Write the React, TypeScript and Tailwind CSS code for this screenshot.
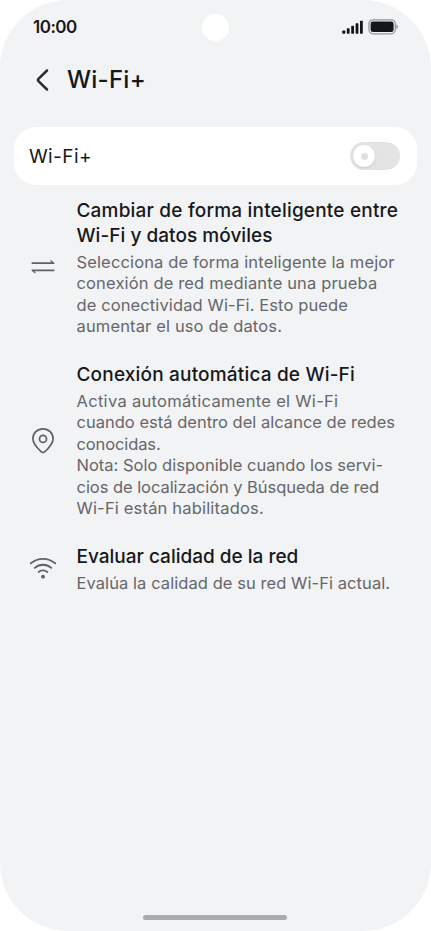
import React from "react";

type Line = { text: string; className: string };

type FeatureProps = {
  icon: React.ReactNode;
  title: Line[];
  body: Line[];
};

const SwapIcon: React.FC = () => (
  <svg width="28" height="28" viewBox="0 0 28 28" fill="#606163">
    <path d="M2.6 8.2H22.6L21.3 7.1Q20.8 6.4 21.6 6.2Q22 6.1 22.5 6.5L25.2 8.8Q25.8 9.3 25.4 9.8L25.2 9.9H2.6Z" />
    <path d="M25.4 15.5H2.8Q2.1 15.9 2.7 16.7L5.4 19.1Q6 19.5 6.4 19.1Q6.9 18.7 6.3 18.1L5.3 17.2H25.4Z" />
  </svg>
);

const PinIcon: React.FC = () => (
  <svg width="28" height="28" viewBox="0 0 28 28" fill="none" stroke="#606163" strokeWidth="1.7">
    <path
      d="M14 1.9C8.3 1.9 3.9 6.1 3.9 11.7C3.9 16.9 8.1 20.9 12.1 24.7C13.3 25.8 14.7 25.8 15.9 24.7C19.9 20.9 24.1 16.9 24.1 11.7C24.1 6.1 19.7 1.9 14 1.9Z"
      strokeLinejoin="round"
    />
    <circle cx="14" cy="11.9" r="3.5" />
  </svg>
);

const WifiIcon: React.FC = () => (
  <svg
    width="28"
    height="28"
    viewBox="0 0 28 28"
    fill="none"
    stroke="#606163"
    strokeWidth="1.8"
    strokeLinecap="round"
  >
    <path d="M1.8 8.3C8.8 2.3 19.2 2.3 26.2 8.3" />
    <path d="M5.7 12.9C10.5 8.7 17.5 8.7 22.3 12.9" />
    <path d="M9.7 17C12.1 14.9 15.9 14.9 18.3 17" />
    <circle cx="14" cy="21.7" r="1.9" fill="#606163" stroke="none" />
  </svg>
);

const StatusBar: React.FC = () => (
  <div className="relative flex h-[54px] items-center justify-between pl-[33px] pr-8">
    <span className="pt-0.5 text-[17px] font-semibold tracking-[-0.5px]">10:00</span>
    <span className="absolute left-[202px] top-3.5 size-[27px] rounded-full bg-white" />
    <div className="flex items-center gap-1">
      <svg width="22" height="14" viewBox="0 0 22 14" fill="#151618">
        <rect x="0.3" y="10.5" width="3" height="3.2" rx="0.7" />
        <rect x="4.8" y="8.2" width="2.8" height="5.5" rx="0.6" />
        <rect x="9.2" y="5.8" width="2.8" height="7.9" rx="0.6" />
        <rect x="13.6" y="3.3" width="2.8" height="10.4" rx="0.6" />
        <rect x="18" y="0.8" width="2.8" height="12.9" rx="0.6" />
      </svg>
      <svg width="31" height="16" viewBox="0 0 31 16" fill="none">
        <rect x="0.9" y="0.8" width="26.4" height="14" rx="4.2" stroke="#939496" strokeWidth="1.2" />
        <rect x="2.6" y="2.5" width="23" height="10.6" rx="2.4" fill="#151618" />
        <path d="M28.4 5.8C30.3 6.4 30.3 9.4 28.4 10Z" fill="#858688" />
      </svg>
    </div>
  </div>
);

const Feature: React.FC<FeatureProps> = ({ icon, title, body }) => (
  <section className="flex items-center gap-[19.5px]">
    <div className="shrink-0">{icon}</div>
    <div className="whitespace-nowrap">
      <h2 className="text-[19px] font-medium leading-[25px]">
        {title.map((line) => (
          <span key={line.text} className={`block ${line.className}`}>
            {line.text}
          </span>
        ))}
      </h2>
      <p className="mt-[3.5px] text-[16.5px] leading-[21.5px] text-[#66676a]">
        {body.map((line) => (
          <span key={line.text} className={`block ${line.className}`}>
            {line.text}
          </span>
        ))}
      </p>
    </div>
  </section>
);

const features: FeatureProps[] = [
  {
    icon: <SwapIcon />,
    title: [
      { text: "Cambiar de forma inteligente entre", className: "tracking-[0.19px]" },
      { text: "Wi-Fi y datos móviles", className: "tracking-[0.04px]" },
    ],
    body: [
      { text: "Selecciona de forma inteligente la mejor", className: "tracking-[0.14px]" },
      { text: "conexión de red mediante una prueba", className: "tracking-[0.15px]" },
      { text: "de conectividad Wi-Fi. Esto puede", className: "tracking-[0.11px]" },
      { text: "aumentar el uso de datos.", className: "tracking-[0.14px]" },
    ],
  },
  {
    icon: <PinIcon />,
    title: [{ text: "Conexión automática de Wi-Fi", className: "tracking-[0.18px]" }],
    body: [
      { text: "Activa automáticamente el Wi-Fi", className: "tracking-[0.3px]" },
      { text: "cuando está dentro del alcance de redes", className: "tracking-[0.01px]" },
      { text: "conocidas.", className: "tracking-[-0.12px]" },
      { text: "Nota: Solo disponible cuando los servi-", className: "tracking-[0.01px]" },
      { text: "cios de localización y Búsqueda de red", className: "tracking-[-0.05px]" },
      { text: "Wi-Fi están habilitados.", className: "tracking-[0.18px]" },
    ],
  },
  {
    icon: <WifiIcon />,
    title: [{ text: "Evaluar calidad de la red", className: "tracking-normal" }],
    body: [{ text: "Evalúa la calidad de su red Wi-Fi actual.", className: "tracking-[0.07px]" }],
  },
];

const App: React.FC = () => (
  <div className="bg-white">
    <main className="flex h-[931px] w-[431px] flex-col overflow-hidden rounded-[68px] bg-[#f2f3f5] font-['Inter','Liberation_Sans',sans-serif] text-[#17181a]">
      <StatusBar />

      <header className="flex h-[52px] items-center gap-[18px] pl-[35px]">
        <svg
          width="14"
          height="24"
          viewBox="0 0 14 24"
          fill="none"
          stroke="#2b2c2e"
          strokeWidth="2.5"
          strokeLinecap="round"
          strokeLinejoin="round"
        >
          <path d="M12 2.5L3.2 11.2Q2.4 12 3.2 12.8L12 21.5" />
        </svg>
        <h1 className="text-2xl font-medium tracking-[0.25px]">Wi-Fi+</h1>
      </header>

      <div className="mx-3.5 mt-[21px] flex h-[58px] items-center justify-between rounded-[22px] bg-white pl-[15px] pr-[17px]">
        <span className="pt-0.5 text-[19px] tracking-[0.4px]">Wi-Fi+</span>
        <button
          type="button"
          role="switch"
          aria-checked="false"
          aria-label="Wi-Fi+"
          className="flex h-7 w-[50px] items-center rounded-full bg-[#e4e4e4] pl-[3px]"
        >
          <span className="flex size-[22px] items-center justify-center rounded-full bg-white shadow-sm">
            <span className="size-[7px] rounded-full bg-[#e0e0e0]" />
          </span>
        </button>
      </div>

      <div className="mt-[13px] flex flex-col gap-[24.5px] pl-[29px]">
        {features.map((feature) => (
          <Feature key={feature.title[0].text} {...feature} />
        ))}
      </div>

      <div className="mb-[11px] ml-[143px] mt-auto h-[5px] w-36 rounded-full bg-[#ababad]" />
    </main>
  </div>
);

export default App;
